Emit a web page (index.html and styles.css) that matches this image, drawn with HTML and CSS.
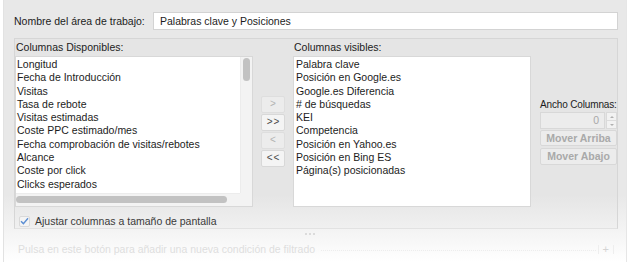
FILE: index.html
```html
<!DOCTYPE html>
<html lang="es">
<head>
<meta charset="utf-8">
<title>Columnas</title>
<link rel="stylesheet" href="styles.css">
</head>
<body>
<div class="window">
  <div class="name-row">
    <span class="name-label">Nombre del área de trabajo:</span>
    <div class="name-input">Palabras clave y Posiciones</div>
  </div>

  <div class="group">
    <div class="cols">
      <div class="col">
        <div class="col-label">Columnas Disponibles:</div>
        <div class="list list-scroll">
          <div class="list-main">
            <ul class="items">
              <li>Longitud</li>
              <li>Fecha de Introducción</li>
              <li>Visitas</li>
              <li>Tasa de rebote</li>
              <li>Visitas estimadas</li>
              <li>Coste PPC estimado/mes</li>
              <li>Fecha comprobación de visitas/rebotes</li>
              <li>Alcance</li>
              <li>Coste por click</li>
              <li>Clicks esperados</li>
            </ul>
            <div class="vscroll"><div class="vthumb"></div></div>
          </div>
          <div class="hscroll-row">
            <div class="hscroll"><div class="hthumb"></div></div>
            <div class="corner"></div>
          </div>
        </div>
      </div>

      <div class="move-btns">
        <div class="mbtn disabled">&gt;</div>
        <div class="mbtn">&gt;&gt;</div>
        <div class="mbtn disabled">&lt;</div>
        <div class="mbtn">&lt;&lt;</div>
      </div>

      <div class="col">
        <div class="col-label">Columnas visibles:</div>
        <div class="list">
          <ul class="items right-items">
            <li>Palabra clave</li>
            <li>Posición en Google.es</li>
            <li>Google.es Diferencia</li>
            <li># de búsquedas</li>
            <li>KEI</li>
            <li>Competencia</li>
            <li>Posición en Yahoo.es</li>
            <li>Posición en Bing ES</li>
            <li>Página(s) posicionadas</li>
          </ul>
        </div>
      </div>

      <div class="side">
        <div class="side-label">Ancho Columnas:</div>
        <div class="spinner">
          <div class="spin-field">0</div>
          <div class="spin-arrows">
            <span class="arr up"></span>
            <span class="arr down"></span>
          </div>
        </div>
        <div class="sbtn">Mover Arriba</div>
        <div class="sbtn">Mover Abajo</div>
      </div>
    </div>

    <div class="check-row">
      <span class="checkbox">
        <svg width="9" height="8" viewBox="0 0 9 8"><path d="M1 4.2 L3.4 6.6 L8 1.2" fill="none" stroke="#5d8fd3" stroke-width="1.4"/></svg>
      </span>
      <span class="check-label">Ajustar columnas a tamaño de pantalla</span>
    </div>
  </div>

  <div class="dots"><span></span><span></span><span></span></div>

  <div class="footer">
    <span class="footer-text">Pulsa en este botón para añadir una nueva condición de filtrado</span>
    <span class="leader"></span>
    <span class="bar"></span>
    <span class="plus">+</span>
    <span class="bar"></span>
  </div>
</div>
</body>
</html>
```

FILE: styles.css
```css
* { box-sizing: border-box; }

html, body {
  margin: 0;
  padding: 0;
}

body {
  width: 630px;
  height: 262px;
  overflow: hidden;
  font-family: "Liberation Sans", Arial, sans-serif;
  font-size: 10.5px;
  color: #1c1c1c;
  background: #fff;
}

.window {
  width: 624px;
  height: 262px;
  margin-left: 3px;
  padding: 12px 0 0 10px;
  background: linear-gradient(to bottom, #e8e8e8 0px, #e8e8e8 195px, #f7f7f7 240px, #ffffff 262px);
  border-left: 1px solid #e2e2e2;
  border-right: 1px solid #e6e6e6;
}

.name-row {
  display: flex;
  align-items: center;
  height: 18px;
}

.name-label {
  width: 139px;
  flex: none;
  line-height: 18px;
}

.name-input {
  width: 465px;
  height: 18px;
  background: #fff;
  border: 1px solid #d3d3d3;
  padding-left: 6px;
  line-height: 16px;
}

.group {
  margin-top: 8px;
  width: 604px;
  height: 191px;
  border: 1px solid #d6d6d6;
  border-bottom-color: #e2e2e2;
  background: rgba(0, 0, 0, 0.012);
}

.cols {
  display: flex;
  align-items: flex-start;
}

.col {
  width: 238px;
  flex: none;
}

.col-label {
  height: 17px;
  line-height: 15px;
  padding-left: 1px;
  padding-top: 1px;
}

.list {
  height: 151px;
  background: #fff;
  border: 1px solid #d8d8d8;
  overflow: hidden;
}

.list-scroll {
  display: flex;
  flex-direction: column;
}

.list-main {
  display: flex;
  height: 136px;
}

.items {
  list-style: none;
  margin: 0;
  padding: 1px 0 0 1px;
  flex: 1;
}

.items li {
  height: 13.3px;
  line-height: 13.3px;
  white-space: nowrap;
}

.right-items {
  padding-left: 2px;
}

.vscroll {
  width: 12px;
  flex: none;
  background: #f3f3f3;
  border-left: 1px solid #ececec;
  padding: 1px 0 0 2px;
}

.vthumb {
  width: 7px;
  height: 23px;
  border-radius: 4px;
  background: #c2c2c2;
}

.hscroll-row {
  display: flex;
  height: 13px;
}

.hscroll {
  flex: 1;
  background: #f3f3f3;
  border-top: 1px solid #ececec;
  padding: 2px 0 0 0;
}

.hthumb {
  width: 211px;
  height: 7px;
  border-radius: 4px;
  background: #c2c2c2;
}

.corner {
  width: 12px;
  background: #f3f3f3;
}

.move-btns {
  width: 24px;
  flex: none;
  margin: 57px 8px 0 8px;
  display: flex;
  flex-direction: column;
  gap: 1px;
}

.mbtn {
  height: 17px;
  border: 1px solid #d8d8d8;
  border-radius: 2px;
  background: #f4f4f4;
  color: #4a4a4a;
  text-align: center;
  line-height: 14px;
  font-size: 10px;
  letter-spacing: 1px;
  padding-left: 1px;
}

.mbtn.disabled {
  background: #ececec;
  color: #b3b3b3;
  border-color: #dedede;
}

.side {
  width: 77px;
  flex: none;
  margin-left: 9px;
  margin-top: 60px;
  display: flex;
  flex-direction: column;
}

.side-label {
  height: 13px;
  line-height: 12px;
  white-space: nowrap;
  font-size: 10px;
  letter-spacing: -0.15px;
}

.spinner {
  display: flex;
  height: 17px;
}

.spin-field {
  width: 65px;
  height: 17px;
  border: 1px solid #d8d8d8;
  background: #ececec;
  color: #a8a8a8;
  text-align: right;
  padding-right: 5px;
  line-height: 15px;
}

.spin-arrows {
  width: 11px;
  margin-left: 1px;
  display: flex;
  flex-direction: column;
  border: 1px solid #dadada;
  background: #f2f2f2;
}

.arr {
  flex: 1;
  display: flex;
  align-items: center;
  justify-content: center;
}

.arr.up {
  border-bottom: 1px solid #dcdcdc;
}

.arr.up::before {
  content: "";
  border-left: 2px solid transparent;
  border-right: 2px solid transparent;
  border-bottom: 2px solid #b0b0b0;
}

.arr.down::before {
  content: "";
  border-left: 2px solid transparent;
  border-right: 2px solid transparent;
  border-top: 2px solid #b0b0b0;
}

.sbtn {
  height: 16px;
  margin-top: 1px;
  border: 1px solid #d8d8d8;
  border-radius: 2px;
  background: #ececec;
  color: #a9a9a9;
  font-weight: bold;
  text-align: center;
  line-height: 14px;
  font-size: 10.5px;
}

.sbtn + .sbtn {
  margin-top: 2px;
  height: 17px;
}

.check-row {
  display: flex;
  align-items: center;
  height: 14px;
  margin-top: 7px;
  padding-left: 4px;
}

.checkbox {
  width: 11px;
  height: 11px;
  border: 1px solid #d9d9d9;
  border-radius: 2px;
  background: #f4f4f4;
  display: flex;
  align-items: center;
  justify-content: center;
}

.check-label {
  margin-left: 5px;
  color: #3a3a3a;
}

.dots {
  display: flex;
  gap: 2px;
  margin: 4px 0 0 291px;
  height: 3px;
}

.dots span {
  width: 2px;
  height: 2px;
  border-radius: 1px;
  background: #d2d2d2;
}

.footer {
  display: flex;
  align-items: center;
  margin-top: 6px;
  padding-left: 4px;
  height: 14px;
  color: #dedede;
}

.footer-text {
  white-space: nowrap;
}

.leader {
  flex: 1;
  margin: 2px 2px 0 6px;
  border-bottom: 1px dotted #ededed;
}

.plus {
  color: #d4d4d4;
  font-size: 11px;
  margin: 0 4px;
}

.bar {
  width: 1px;
  height: 9px;
  background: #eeeeee;
}

.bar:last-child {
  margin-right: 12px;
}
```
